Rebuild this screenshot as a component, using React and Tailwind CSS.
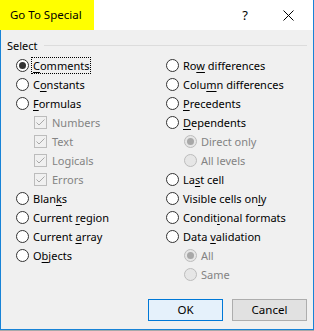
import React from "react";

const FONT = { fontFamily: '"Segoe UI", "Noto Sans", "Open Sans", sans-serif' };

function Label({ text, u }) {
  if (u === undefined || u < 0) return <span>{text}</span>;
  return (
    <span>
      {text.slice(0, u)}
      <span className="underline underline-offset-2">{text[u]}</span>
      {text.slice(u + 1)}
    </span>
  );
}

function Radio({ checked, disabled }) {
  return (
    <span
      className={
        "flex h-[13px] w-[13px] shrink-0 items-center justify-center rounded-full border " +
        (disabled ? "border-[#bcbcbc] bg-[#e6e6e6]" : "border-[#333333] bg-white")
      }
    >
      {checked && (
        <span
          className={
            "h-[7px] w-[7px] rounded-full " + (disabled ? "bg-[#a8a8a8]" : "bg-[#333333]")
          }
        />
      )}
    </span>
  );
}

function Check() {
  return (
    <span className="flex h-[13px] w-[13px] shrink-0 items-center justify-center border border-[#bcbcbc] bg-[#f0f0f0]">
      <svg width="11" height="11" viewBox="0 0 11 11">
        <path d="M1.5 5.5 L4 8 L9.5 2.5" fill="none" stroke="#a8a8a8" strokeWidth="1" />
      </svg>
    </span>
  );
}

function RadioRow({ text, u, checked, focus }) {
  return (
    <div className="flex h-[19px] items-center">
      <Radio checked={checked} />
      <span
        className={
          "ml-[3px] px-[1px] leading-[15px] text-black " +
          (focus ? "outline outline-1 outline-dotted outline-black" : "")
        }
      >
        <Label text={text} u={u} />
      </span>
    </div>
  );
}

function SubRadio({ text, checked }) {
  return (
    <div className="flex h-[19px] items-center pl-[18px]">
      <Radio checked={checked} disabled />
      <span className="ml-[4px] text-[#838383]">{text}</span>
    </div>
  );
}

function SubCheck({ text }) {
  return (
    <div className="flex h-[19px] items-center pl-[18px]">
      <Check />
      <span className="ml-[5px] text-[#838383]">{text}</span>
    </div>
  );
}

export default function App() {
  return (
    <div
      className="flex h-[331px] w-[314px] flex-col text-[11px] leading-none text-black"
      style={FONT}
    >
      <div className="flex h-[330px] flex-col border-x border-b border-[#1883d7] bg-[#f0f0f0]">
        <div className="-ml-px flex h-[30px] shrink-0 items-center bg-white">
          <div className="flex h-[30px] w-[94px] items-center bg-[#ffff00] pl-[10px] text-[11.5px]">
            Go To Special
          </div>
          <div className="flex-1" />
          <div className="mr-[35px] text-[13px] text-black">?</div>
          <svg width="11" height="11" viewBox="0 0 11 11" className="mr-[19px]">
            <path d="M0.5 0.5 L10.5 10.5 M10.5 0.5 L0.5 10.5" stroke="#000" strokeWidth="1" />
          </svg>
        </div>
        <div className="flex flex-1 flex-col px-[6px] pt-[6px]">
          <div className="flex h-[19px] items-center">
            <span>Select</span>
            <div className="ml-[6px] mr-[0px] h-px flex-1 bg-[#dcdcdc]" />
          </div>
          <div className="mt-px flex pl-[9px]">
            <div className="flex w-[150px] flex-col">
              <RadioRow text="Comments" u={0} checked focus />
              <RadioRow text="Constants" u={1} />
              <RadioRow text="Formulas" u={0} />
              <SubCheck text="Numbers" />
              <SubCheck text="Text" />
              <SubCheck text="Logicals" />
              <SubCheck text="Errors" />
              <RadioRow text="Blanks" u={4} />
              <RadioRow text="Current region" u={8} />
              <RadioRow text="Current array" u={8} />
              <RadioRow text="Objects" u={1} />
            </div>
            <div className="flex flex-col">
              <RadioRow text="Row differences" u={2} />
              <RadioRow text="Column differences" u={4} />
              <RadioRow text="Precedents" u={0} />
              <RadioRow text="Dependents" u={0} />
              <SubRadio text="Direct only" checked />
              <SubRadio text="All levels" />
              <RadioRow text="Last cell" u={2} />
              <RadioRow text="Visible cells only" u={16} />
              <RadioRow text="Conditional formats" u={6} />
              <RadioRow text="Data validation" u={5} />
              <SubRadio text="All" checked />
              <SubRadio text="Same" />
            </div>
          </div>
          <div className="mt-[15px] flex justify-end gap-[9px]">
            <button className="flex h-[22px] w-[75px] items-center justify-center border border-[#0078d7] bg-[#e5f1fb] text-[11.5px]">
              OK
            </button>
            <button className="flex h-[22px] w-[75px] items-center justify-center border border-[#adadad] bg-[#e1e1e1] text-[11.5px]">
              Cancel
            </button>
          </div>
        </div>
      </div>
      <div className="h-px bg-[#a9a9a9]" />
    </div>
  );
}
